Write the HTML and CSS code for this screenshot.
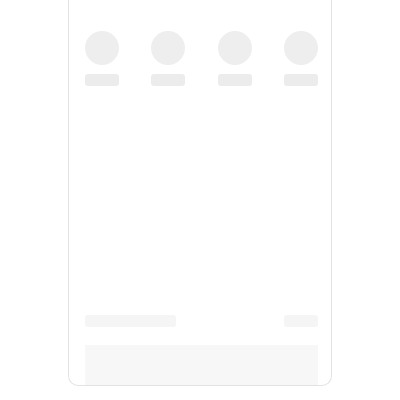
FILE: index.html
```html
<!DOCTYPE html>
<html>
<head>
<meta charset="utf-8">
<link rel="stylesheet" href="styles.css">
</head>
<body>
<div class="card">
  <div class="items">
    <div class="item"><div class="circle"></div><div class="label"></div></div>
    <div class="item"><div class="circle"></div><div class="label"></div></div>
    <div class="item"><div class="circle"></div><div class="label"></div></div>
    <div class="item"><div class="circle"></div><div class="label"></div></div>
  </div>
  <div class="spacer"></div>
  <div class="footer-row">
    <div class="line-long"></div>
    <div class="line-short"></div>
  </div>
  <div class="box"></div>
</div>
</body>
</html>
```

FILE: styles.css
```css
html, body {
  margin: 0;
  padding: 0;
  background: #ffffff;
}
.card {
  box-sizing: border-box;
  width: 264px;
  height: 386px;
  margin: 0 auto;
  border: 1px solid #e3e3e3;
  border-top: 0;
  border-radius: 0 0 10px 10px;
  overflow: hidden;
  padding: 31px 13px 0 16px;
  display: flex;
  flex-direction: column;
  background: #fff;
}
.items {
  display: flex;
  justify-content: space-between;
}
.item {
  display: flex;
  flex-direction: column;
  align-items: center;
  gap: 9px;
}
.circle {
  width: 34px;
  height: 34px;
  border-radius: 50%;
  background: #eeeeee;
}
.label {
  width: 34px;
  height: 12px;
  border-radius: 3px;
  background: #ececec;
}
.spacer {
  flex: 1;
}
.footer-row {
  display: flex;
  justify-content: space-between;
}
.line-long {
  width: 91px;
  height: 12px;
  border-radius: 3px;
  background: #f5f5f5;
}
.line-short {
  width: 34px;
  height: 12px;
  border-radius: 3px;
  background: #f5f5f5;
}
.box {
  margin-top: 18px;
  height: 40px;
  flex: none;
  background: #f7f7f7;
}
```
